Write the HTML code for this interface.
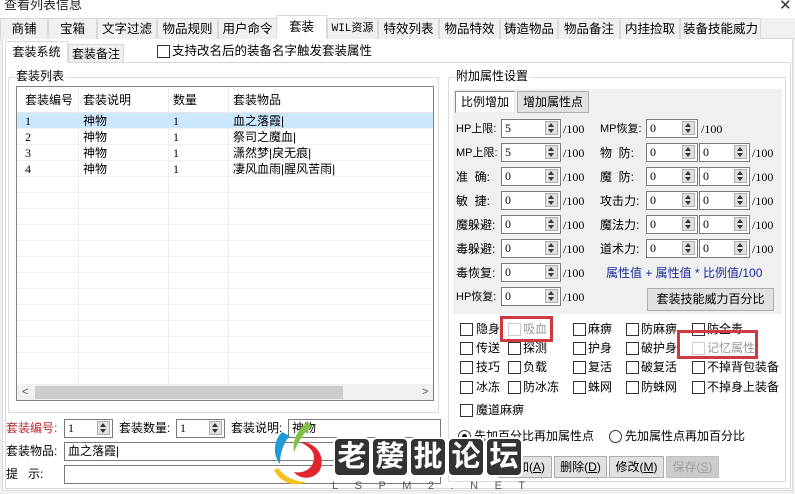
<!DOCTYPE html>
<html><head><meta charset="utf-8">
<style>
*{box-sizing:border-box;margin:0;padding:0}
body{width:795px;height:493px;overflow:hidden;background:#f0f0f0;font-family:"Liberation Sans","Noto Sans CJK SC","WenQuanYi Zen Hei",sans-serif;font-size:12px;color:#000;position:relative}
.a{position:absolute;white-space:nowrap;line-height:16px}
.tab{position:absolute;top:18px;height:21px;border:1px solid #d9d9d9;border-bottom:none;background:#f0f0f0;text-align:center;line-height:20px;font-size:12.5px}
.in{position:absolute;background:#fff;border:1px solid #7a7a7a;height:19px;padding-left:3px;line-height:17px;font-family:"Liberation Serif","Noto Sans CJK SC",serif}
.sp{position:absolute;width:13px;height:14px;top:1px;right:2px;background:#e1e1e1;border:1px solid #adadad}
.sp:before{content:"";position:absolute;left:2px;top:1px;border-left:3.5px solid transparent;border-right:3.5px solid transparent;border-bottom:4px solid #333}
.sp:after{content:"";position:absolute;left:2px;bottom:1px;border-left:3.5px solid transparent;border-right:3.5px solid transparent;border-top:4px solid #333}
.cb{position:absolute;width:13px;height:13px;border:1px solid #333;background:#fff}
.cbd{border-color:#ccc}
.btn{position:absolute;height:22px;background:#e1e1e1;border:1px solid #adadad;text-align:center;line-height:20px}
.grp{position:absolute;border:1px solid #dcdcdc}
.row{position:absolute;left:0;width:417px;height:16px;border-bottom:1px solid #f0f0f0}
.c{position:absolute;top:0;line-height:16px}
.wm{position:absolute;top:437px;width:38px;height:40px;background:#333;border-radius:6px;border:2px solid #fff;color:#fff;font-size:29px;line-height:36px;text-align:center;font-weight:bold}
</style></head><body>
<div style="position:absolute;left:0;top:0;width:795px;height:18px;background:#fff"></div>
<div class="a" style="left:4px;top:-3px;font-size:13px;color:#222">查看列表信息</div>
<div class="a" style="left:779px;top:-2px;font-size:15px;color:#333">✕</div>
<div style="position:absolute;left:0;top:38px;width:795px;height:1px;background:#d9d9d9"></div>
<div class="tab" style="left:0;width:48px">商铺</div>
<div class="tab" style="left:48px;width:49px">宝箱</div>
<div class="tab" style="left:97px;width:60px">文字过滤</div>
<div class="tab" style="left:157px;width:61px">物品规则</div>
<div class="tab" style="left:218px;width:59px">用户命令</div>
<div class="tab" style="left:327px;width:51px;font-family:'Liberation Mono','Noto Sans CJK SC',monospace;font-size:11px">WIL资源</div>
<div class="tab" style="left:378px;width:61px">特效列表</div>
<div class="tab" style="left:439px;width:61px">物品特效</div>
<div class="tab" style="left:500px;width:58px">铸造物品</div>
<div class="tab" style="left:558px;width:62px">物品备注</div>
<div class="tab" style="left:620px;width:60px">内挂捡取</div>
<div class="tab" style="left:680px;width:81px">装备技能威力</div>
<div class="tab" style="left:276px;top:15px;height:25px;width:51px;background:#fff;line-height:22px">套装</div>
<div style="position:absolute;left:2px;top:39px;width:791px;height:452px;background:#fff;border:1px solid #d9d9d9;border-top:none"></div>
<div style="position:absolute;left:5px;top:62px;width:786px;height:427px;border:1px solid #d9d9d9"></div>
<div class="a" style="left:68px;top:44px;width:56px;height:19px;background:#f0f0f0;border:1px solid #d9d9d9;text-align:center;line-height:18px">套装备注</div>
<div class="a" style="left:5px;top:41px;width:63px;height:22px;background:#fff;border:1px solid #d9d9d9;border-bottom:none;text-align:center;line-height:20px">套装系统</div>
<div class="cb" style="left:157px;top:45px"></div>
<div class="a" style="left:172px;top:43px;font-size:12.5px">支持改名后的装备名字触发套装属性</div>
<div class="grp" style="left:8px;top:77px;width:431px;height:336px"></div>
<div class="a" style="left:14px;top:68px;background:#fff;padding:0 2px">套装列表</div>
<div style="position:absolute;left:16px;top:86px;width:418px;height:315px;border:1px solid #828282;background:#fff;overflow:hidden">
 <div style="position:absolute;left:0;top:0;width:418px;height:26px;border-bottom:1px solid #e5e5e5"></div>
 <div class="c" style="left:8px;top:5px">套装编号</div>
 <div class="c" style="left:66px;top:5px">套装说明</div>
 <div class="c" style="left:156px;top:5px">数量</div>
 <div class="c" style="left:216px;top:5px">套装物品</div>
 <div style="position:absolute;left:61px;top:0;width:1px;height:300px;background:#ececec"></div>
 <div style="position:absolute;left:151px;top:0;width:1px;height:300px;background:#ececec"></div>
 <div style="position:absolute;left:211px;top:0;width:1px;height:300px;background:#ececec"></div>
 <div class="row" style="top:26px;background:#cce8ff"></div>
 <div class="row" style="top:42px"></div><div class="row" style="top:58px"></div><div class="row" style="top:74px"></div>
 <div class="row" style="top:90px"></div><div class="row" style="top:106px"></div><div class="row" style="top:122px"></div>
 <div class="row" style="top:138px"></div><div class="row" style="top:154px"></div><div class="row" style="top:170px"></div>
 <div class="row" style="top:186px"></div><div class="row" style="top:202px"></div><div class="row" style="top:218px"></div>
 <div class="row" style="top:234px"></div><div class="row" style="top:250px"></div><div class="row" style="top:266px"></div><div class="row" style="top:282px"></div>
 <div class="c" style="left:8px;top:26px;font-family:'Liberation Serif',serif">1</div><div class="c" style="left:66px;top:26px">神物</div><div class="c" style="left:156px;top:26px;font-family:'Liberation Serif',serif">1</div><div class="c" style="left:216px;top:26px">血之落霞|</div>
 <div class="c" style="left:8px;top:42px;font-family:'Liberation Serif',serif">2</div><div class="c" style="left:66px;top:42px">神物</div><div class="c" style="left:156px;top:42px;font-family:'Liberation Serif',serif">1</div><div class="c" style="left:216px;top:42px">祭司之魔血|</div>
 <div class="c" style="left:8px;top:58px;font-family:'Liberation Serif',serif">3</div><div class="c" style="left:66px;top:58px">神物</div><div class="c" style="left:156px;top:58px;font-family:'Liberation Serif',serif">1</div><div class="c" style="left:216px;top:58px">潇然梦|戾无痕|</div>
 <div class="c" style="left:8px;top:74px;font-family:'Liberation Serif',serif">4</div><div class="c" style="left:66px;top:74px">神物</div><div class="c" style="left:156px;top:74px;font-family:'Liberation Serif',serif">1</div><div class="c" style="left:216px;top:74px">凄风血雨|腥风苦雨|</div>
 <div style="position:absolute;left:0;top:297px;width:418px;height:17px;background:#f0f0f0"></div>
 <div style="position:absolute;left:18px;top:299px;width:308px;height:13px;background:#cdcdcd"></div>
 <div class="c" style="left:5px;top:297px;color:#555;font-size:11px">&lt;</div>
 <div class="c" style="left:405px;top:297px;color:#555;font-size:11px">&gt;</div>
</div>
<div class="a" style="left:6px;top:420px;color:#c0282d">套装编号:</div>
<div class="in" style="left:64px;top:419px;width:49px">1<div class="sp"></div></div>
<div class="a" style="left:119px;top:420px">套装数量:</div>
<div class="in" style="left:176px;top:419px;width:49px">1<div class="sp"></div></div>
<div class="a" style="left:231px;top:420px">套装说明:</div>
<div class="in" style="left:288px;top:419px;width:153px;font-family:'Liberation Sans','Noto Sans CJK SC',sans-serif">神物</div>
<div class="a" style="left:6px;top:443px">套装物品:</div>
<div class="in" style="left:64px;top:442px;width:377px;font-family:'Liberation Sans','Noto Sans CJK SC',sans-serif">血之落霞|</div>
<div class="a" style="left:6px;top:466px">提&nbsp;&nbsp;&nbsp;示:</div>
<div class="in" style="left:64px;top:465px;width:377px"></div>
<div class="grp" style="left:448px;top:77px;width:338px;height:405px"></div>
<div class="a" style="left:454px;top:68px;background:#fff;padding:0 2px">附加属性设置</div>
<div style="position:absolute;left:453px;top:89px;width:329px;height:225px;background:#f0f0f0"></div>
<div class="btn" style="left:455px;top:91px;width:60px;background:#fff;border-color:#888;border-right-color:#eee;border-bottom-color:#eee">比例增加</div>
<div class="btn" style="left:517px;top:91px;width:72px">增加属性点</div>
<div class="a" style="left:456px;top:121px;font-size:11px">HP上限:</div><div class="in" style="left:501px;top:119px;width:60px">5<div class="sp"></div></div><div class="a" style="left:563px;top:121px;font-family:'Liberation Serif',serif">/100</div>
<div class="a" style="left:456px;top:145px;font-size:11px">MP上限:</div><div class="in" style="left:501px;top:143px;width:60px">5<div class="sp"></div></div><div class="a" style="left:563px;top:145px;font-family:'Liberation Serif',serif">/100</div>
<div class="a" style="left:456px;top:169px">准&nbsp;&nbsp;确:</div><div class="in" style="left:501px;top:167px;width:60px">0<div class="sp"></div></div><div class="a" style="left:563px;top:169px;font-family:'Liberation Serif',serif">/100</div>
<div class="a" style="left:456px;top:193px">敏&nbsp;&nbsp;捷:</div><div class="in" style="left:501px;top:191px;width:60px">0<div class="sp"></div></div><div class="a" style="left:563px;top:193px;font-family:'Liberation Serif',serif">/100</div>
<div class="a" style="left:456px;top:217px">魔躲避:</div><div class="in" style="left:501px;top:215px;width:60px">0<div class="sp"></div></div><div class="a" style="left:563px;top:217px;font-family:'Liberation Serif',serif">/100</div>
<div class="a" style="left:456px;top:241px">毒躲避:</div><div class="in" style="left:501px;top:239px;width:60px">0<div class="sp"></div></div><div class="a" style="left:563px;top:241px;font-family:'Liberation Serif',serif">/100</div>
<div class="a" style="left:456px;top:265px">毒恢复:</div><div class="in" style="left:501px;top:263px;width:60px">0<div class="sp"></div></div><div class="a" style="left:563px;top:265px;font-family:'Liberation Serif',serif">/100</div>
<div class="a" style="left:456px;top:289px;font-size:11px">HP恢复:</div><div class="in" style="left:501px;top:287px;width:60px">0<div class="sp"></div></div><div class="a" style="left:563px;top:289px;font-family:'Liberation Serif',serif">/100</div>
<div class="a" style="left:600px;top:121px;font-size:11px">MP恢复:</div><div class="in" style="left:646px;top:119px;width:52px">0<div class="sp"></div></div><div class="a" style="left:701px;top:121px;font-family:'Liberation Serif',serif">/100</div>
<div class="a" style="left:600px;top:145px">物&nbsp;&nbsp;防:</div><div class="in" style="left:646px;top:143px;width:52px">0<div class="sp"></div></div><div class="in" style="left:699px;top:143px;width:51px">0<div class="sp"></div></div><div class="a" style="left:752px;top:145px;font-family:'Liberation Serif',serif">/100</div>
<div class="a" style="left:600px;top:169px">魔&nbsp;&nbsp;防:</div><div class="in" style="left:646px;top:167px;width:52px">0<div class="sp"></div></div><div class="in" style="left:699px;top:167px;width:51px">0<div class="sp"></div></div><div class="a" style="left:752px;top:169px;font-family:'Liberation Serif',serif">/100</div>
<div class="a" style="left:600px;top:193px">攻击力:</div><div class="in" style="left:646px;top:191px;width:52px">0<div class="sp"></div></div><div class="in" style="left:699px;top:191px;width:51px">0<div class="sp"></div></div><div class="a" style="left:752px;top:193px;font-family:'Liberation Serif',serif">/100</div>
<div class="a" style="left:600px;top:217px">魔法力:</div><div class="in" style="left:646px;top:215px;width:52px">0<div class="sp"></div></div><div class="in" style="left:699px;top:215px;width:51px">0<div class="sp"></div></div><div class="a" style="left:752px;top:217px;font-family:'Liberation Serif',serif">/100</div>
<div class="a" style="left:600px;top:241px">道术力:</div><div class="in" style="left:646px;top:239px;width:52px">0<div class="sp"></div></div><div class="in" style="left:699px;top:239px;width:51px">0<div class="sp"></div></div><div class="a" style="left:752px;top:241px;font-family:'Liberation Serif',serif">/100</div>
<div class="a" style="left:606px;top:265px;color:#1a2a9a">属性值 + 属性值 * 比例值/100</div>
<div class="btn" style="left:647px;top:288px;width:127px;height:23px;line-height:21px">套装技能威力百分比</div>
<div class="cb" style="left:460px;top:323px"></div><div class="a" style="left:476px;top:321px">隐身</div>
<div class="cb cbd" style="left:508px;top:323px"></div><div class="a" style="left:523px;top:321px;color:#999">吸血</div>
<div class="cb" style="left:573px;top:323px"></div><div class="a" style="left:588px;top:321px">麻痹</div>
<div class="cb" style="left:626px;top:323px"></div><div class="a" style="left:641px;top:321px">防麻痹</div>
<div class="cb" style="left:692px;top:323px"></div><div class="a" style="left:707px;top:321px">防全毒</div>
<div class="cb" style="left:460px;top:342px"></div><div class="a" style="left:476px;top:340px">传送</div>
<div class="cb" style="left:508px;top:342px"></div><div class="a" style="left:523px;top:340px">探测</div>
<div class="cb" style="left:573px;top:342px"></div><div class="a" style="left:588px;top:340px">护身</div>
<div class="cb" style="left:626px;top:342px"></div><div class="a" style="left:641px;top:340px">破护身</div>
<div class="cb cbd" style="left:692px;top:342px"></div><div class="a" style="left:707px;top:340px;color:#999">记忆属性</div>
<div class="cb" style="left:460px;top:361px"></div><div class="a" style="left:476px;top:359px">技巧</div>
<div class="cb" style="left:508px;top:361px"></div><div class="a" style="left:523px;top:359px">负载</div>
<div class="cb" style="left:573px;top:361px"></div><div class="a" style="left:588px;top:359px">复活</div>
<div class="cb" style="left:626px;top:361px"></div><div class="a" style="left:641px;top:359px">破复活</div>
<div class="cb" style="left:692px;top:361px"></div><div class="a" style="left:707px;top:359px">不掉背包装备</div>
<div class="cb" style="left:460px;top:381px"></div><div class="a" style="left:476px;top:379px">冰冻</div>
<div class="cb" style="left:508px;top:381px"></div><div class="a" style="left:523px;top:379px">防冰冻</div>
<div class="cb" style="left:573px;top:381px"></div><div class="a" style="left:588px;top:379px">蛛网</div>
<div class="cb" style="left:626px;top:381px"></div><div class="a" style="left:641px;top:379px">防蛛网</div>
<div class="cb" style="left:692px;top:381px"></div><div class="a" style="left:707px;top:379px">不掉身上装备</div>
<div class="cb" style="left:460px;top:404px"></div><div class="a" style="left:476px;top:402px">魔道麻痹</div>
<div style="position:absolute;left:500px;top:316px;width:53px;height:26px;border:3px solid #d0393f"></div>
<div style="position:absolute;left:677px;top:330px;width:81px;height:29px;border:3px solid #d0393f"></div>
<div style="position:absolute;left:458px;top:430px;width:13px;height:13px;border:1px solid #333;border-radius:50%;background:#fff"><div style="position:absolute;left:3px;top:3px;width:5px;height:5px;border-radius:50%;background:#111"></div></div>
<div class="a" style="left:474px;top:428px">先加百分比再加属性点</div>
<div style="position:absolute;left:609px;top:430px;width:13px;height:13px;border:1px solid #333;border-radius:50%;background:#fff"></div>
<div class="a" style="left:625px;top:428px">先加属性点再加百分比</div>
<div class="btn" style="left:498px;top:456px;width:54px">添加(<u>A</u>)</div>
<div class="btn" style="left:554px;top:456px;width:53px">删除(<u>D</u>)</div>
<div class="btn" style="left:609px;top:456px;width:55px">修改(<u>M</u>)</div>
<div class="btn" style="left:666px;top:456px;width:53px;color:#a0a0a0;background:#ccc;border-color:#bfbfbf">保存(<u>S</u>)</div>
<svg style="position:absolute;left:270px;top:420px" width="62" height="73" viewBox="0 0 62 73">
<path d="M38 2 C28 8 22 20 24 32 C28 22 34 12 42 6Z" fill="#7dc242"/>
<path d="M12 12 C4 20 2 34 10 44 C10 32 14 22 20 16Z" fill="#1f9ad6"/>
<path d="M30 22 C46 22 56 36 50 50 C44 60 30 60 24 52 C34 54 44 48 44 38 C44 30 38 26 30 22Z" fill="#e0262c"/>
<path d="M4 50 C10 62 24 68 36 62 C24 62 14 56 8 48Z" fill="#f5c21b"/>
</svg>
<div class="wm" style="left:333px">老</div>
<div class="wm" style="left:371px">嫠</div>
<div class="wm" style="left:409px">批</div>
<div class="wm" style="left:447px">论</div>
<div class="wm" style="left:485px">坛</div>
<div class="a" style="left:332px;top:478px;color:#555;font-size:11px;letter-spacing:16.5px">LSPM2.NET</div>
</body></html>
